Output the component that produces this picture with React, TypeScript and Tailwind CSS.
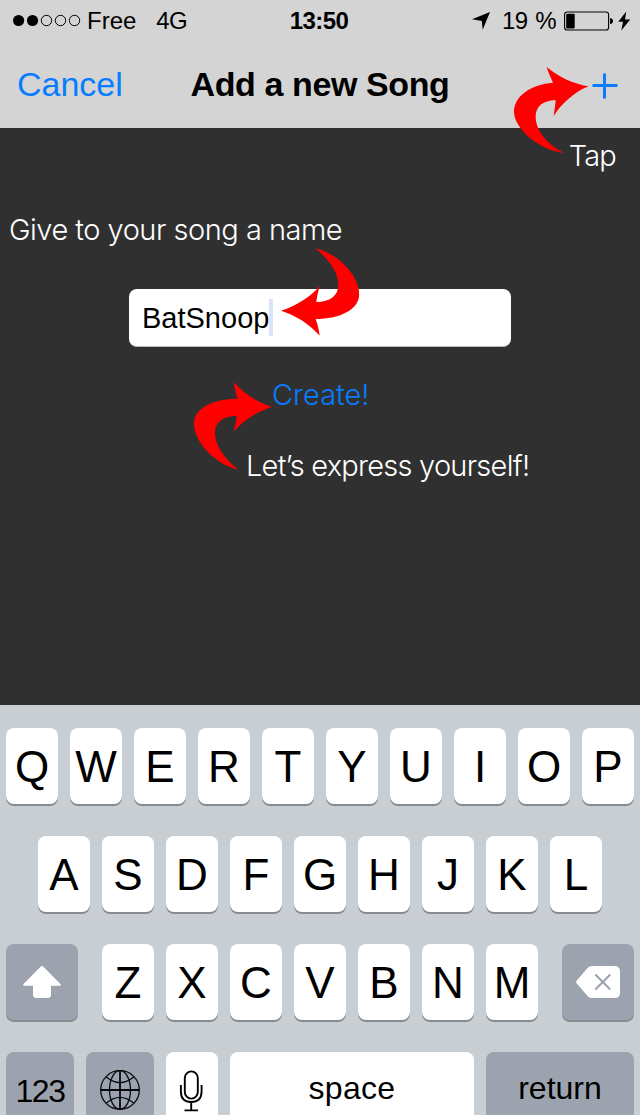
import type { ReactNode } from "react";

function Key({ children, className = "" }: { children?: ReactNode; className?: string }) {
  return (
    <button
      type="button"
      className={`flex h-[76px] shrink-0 items-center justify-center rounded-[8px] shadow-[0_2px_0_#888b8f] ${className}`}
    >
      {children}
    </button>
  );
}

function LetterRow({ letters }: { letters: string }) {
  return (
    <>
      {letters.split("").map((letter) => (
        <Key key={letter} className="w-[52px] bg-white text-[44px] leading-none">
          <span className="pt-[2px]">{letter}</span>
        </Key>
      ))}
    </>
  );
}

function CurvedArrow({ className }: { className: string }) {
  return (
    <svg viewBox="0 0 235 263" className={`absolute h-[87.7px] w-[78.3px] ${className}`} fill="#ff0000" aria-hidden="true">
      <path d="M235 75 C190 61 150 35 119 0 C121 17 125 35 131 50 C62 50 0 76 0 125 C0 178 61 246 133 263 C94 232 63 192 63 153 C63 119 88 102 129 101 C127 117 123 133 119 149 C146 117 188 89 235 75 Z" />
    </svg>
  );
}

function TapArrow() {
  return (
    <svg viewBox="0 0 223 258" className="absolute top-[67px] left-[514.3px] h-[86px] w-[74.3px]" fill="#ff0000" aria-hidden="true">
      <path d="M223 58 C178 50 133 30 98 0 C103 16 110 32 117 47 C52 52 0 86 0 135 C0 183 75 252 153 258 C106 238 65 194 65 149 C65 117 87 101 125 99 C124 115 121 131 119 147 C142 111 179 77 223 58 Z" />
    </svg>
  );
}

function StatusBar() {
  return (
    <div className="grid h-[40px] grid-cols-[289px_60px_1fr] items-center text-[24px] leading-none">
      <div className="flex items-center">
        <svg viewBox="0 0 68 14" className="ml-[13px] h-[14px] w-[68px]" aria-hidden="true">
          <circle cx="5.6" cy="7.5" r="5.6" />
          <circle cx="19.5" cy="7.5" r="5.6" />
          <circle cx="33.5" cy="7.5" r="5.2" fill="none" stroke="black" />
          <circle cx="47.5" cy="7.5" r="5.2" fill="none" stroke="black" />
          <circle cx="61.5" cy="7.5" r="5.2" fill="none" stroke="black" />
        </svg>
        <span className="ml-[6px] pt-[2px]">Free</span>
        <span className="ml-[20px] pt-[2px] tracking-[-0.6px]">4G</span>
      </div>
      <div className="pt-[2px] text-center font-bold tracking-[-0.6px]">13:50</div>
      <div className="flex items-center">
        <svg viewBox="0 0 18 18" className="mt-[1px] ml-[123px] h-[18px] w-[18px]" aria-hidden="true">
          <path d="M18 0 L10.7 17.8 L9.8 8.9 L0 7.2 Z" />
        </svg>
        <span className="ml-[12px] w-[60px] pt-[2px] tracking-[-0.7px] whitespace-nowrap [word-spacing:2px]">19 %</span>
        <svg viewBox="0 0 68 20" className="mt-[1px] ml-[2px] h-[20px] w-[68px]" aria-hidden="true">
          <rect x="0.6" y="1" width="44" height="18" rx="2.6" fill="none" stroke="black" strokeWidth="1.1" />
          <rect x="2.2" y="2.8" width="8.5" height="14.6" rx="1" />
          <path d="M46 7 Q49 7.5 49 10 Q49 12.500 46 13 Z" />
          <path d="M62.200 0.500 L54.300 10.700 L59 10.700 L57.300 19.500 L66.200 8.500 L61 8.500 Z" />
        </svg>
      </div>
    </div>
  );
}

export default function App() {
  return (
    <div className="relative flex h-[1115px] w-[640px] flex-col overflow-hidden bg-[#303030] font-['Liberation_Sans',Arial,sans-serif] text-black">
      <header className="h-[128px] bg-[#d4d4d4]">
        <StatusBar />
        <nav className="grid h-[88px] grid-cols-[174px_1fr_174px] items-center text-[34px] leading-none">
          <button type="button" className="pl-[17px] text-left text-[#087dff]">Cancel</button>
          <h1 className="text-center font-bold tracking-[-0.4px] whitespace-nowrap">Add a new Song</h1>
          <svg viewBox="0 0 26 26" className="mt-[3px] mr-[22px] h-[26px] w-[26px] justify-self-end" aria-label="Add">
            <path d="M0.500 12.500 H25.500 M12.500 0.500 V25.500" stroke="#087dff" strokeWidth="3" />
          </svg>
        </nav>
      </header>

      <main className="flex h-[577px] flex-col font-['Inter','Liberation_Sans',sans-serif] text-[29px] leading-[36px] font-light text-white">
        <p className="mt-[10px] mr-[24px] self-end tracking-[-0.8px]">Tap</p>
        <p className="mt-[38px] ml-[9px] self-start tracking-[-0.5px] whitespace-nowrap">Give to your song a name</p>
        <div className="mt-[41px] ml-[129px] flex h-[58px] w-[382px] items-center rounded-[8px] border-b border-[#bbbbbb] bg-white pl-[13px] font-['Liberation_Sans',sans-serif] text-[29px] font-normal text-black">
          <span>BatSnoop</span>
          <span className="h-[37px] w-[4px] bg-[#dbe2fa]" />
        </div>
        <button type="button" className="mt-[30px] ml-[272px] self-start text-[#087dff]">Create!</button>
        <p className="mt-[35px] ml-[246px] self-start tracking-[-0.75px] whitespace-nowrap">Let’s express yourself!</p>
      </main>

      <section className="flex h-[410px] flex-col gap-[32px] bg-[#c9ced2] px-[6px] pt-[23px]">
        <div className="flex gap-[12px]">
          <LetterRow letters="QWERTYUIOP" />
        </div>
        <div className="flex justify-center gap-[12px]">
          <LetterRow letters="ASDFGHJKL" />
        </div>
        <div className="flex justify-between">
          <Key className="w-[72px] bg-[#9ca3af]">
            <svg viewBox="0 0 38 32" className="h-[32px] w-[38px]" fill="white" aria-label="Shift">
              <path d="M19 0 Q19.600 0 20.200 .6 L37.400 18 Q38.500 19.500 36.700 19.700 H28 V28.500 Q28 32 24.500 32 H13.500 Q10 32 10 28.500 V19.700 H1.300 Q-.5 19.500 .6 18 L17.800 .6 Q18.400 0 19 0 Z" />
            </svg>
          </Key>
          <div className="flex gap-[12px]">
            <LetterRow letters="ZXCVBNM" />
          </div>
          <Key className="w-[72px] bg-[#9ca3af]">
            <svg viewBox="0 0 44 32" className="h-[32px] w-[44px]" aria-label="Delete">
              <path d="M12 1.500 Q13.500 0 16 0 H38.500 Q44 0 44 5.500 V26.500 Q44 32 38.500 32 H16 Q13.500 32 12 30.500 L.6 17.300 Q-.3 16 .6 14.700 Z" fill="white" />
              <path d="M19.300 8.500 L34.300 23.500 M34.300 8.500 L19.300 23.500" stroke="#9ca3af" strokeWidth="2" />
            </svg>
          </Key>
        </div>
        <div className="flex gap-[12px] text-[32px] leading-none">
          <Key className="w-[68px] bg-[#9ca3af] tracking-[-1.5px]">
            <span className="pt-[2px]">123</span>
          </Key>
          <Key className="w-[68px] bg-[#9ca3af]">
            <svg viewBox="0 0 40 40" className="h-[40px] w-[40px]" fill="none" stroke="#080a0c" strokeWidth="1.300" aria-label="Change keyboard">
              <circle cx="20" cy="20" r="19.300" />
              <ellipse cx="20" cy="20" rx="10.500" ry="19.300" />
              <path d="M20 .7 V39.300 M.7 20 H39.300" strokeWidth="1.800" />
              <path d="M6 6.800 Q20 18.500 34 6.800 M6 33.200 Q20 21.500 34 33.200" />
            </svg>
          </Key>
          <Key className="w-[52px] bg-white">
            <svg viewBox="0 0 24 42" className="mt-[2px] mr-[2px] h-[42px] w-[24px]" fill="none" stroke="black" strokeWidth="1.900" aria-label="Dictate">
              <rect x="5.800" y="1.400" width="13" height="27.200" rx="6.500" />
              <path d="M1.900 15 V21.500 Q1.900 32 12.200 32 Q22.600 32 22.600 21.500 V15 M12.200 32 V40.400 M5.500 40.400 H19" />
            </svg>
          </Key>
          <Key className="w-[244px] bg-white">
            <span className="pb-[4px] tracking-[0.3px]">space</span>
          </Key>
          <Key className="w-[148px] bg-[#9ca3af]">
            <span className="pb-[4px]">return</span>
          </Key>
        </div>
      </section>

      <TapArrow />
      <CurvedArrow className="top-[247.7px] left-[281px] rotate-180" />
      <CurvedArrow className="top-[382.3px] left-[194px]" />
    </div>
  );
}
